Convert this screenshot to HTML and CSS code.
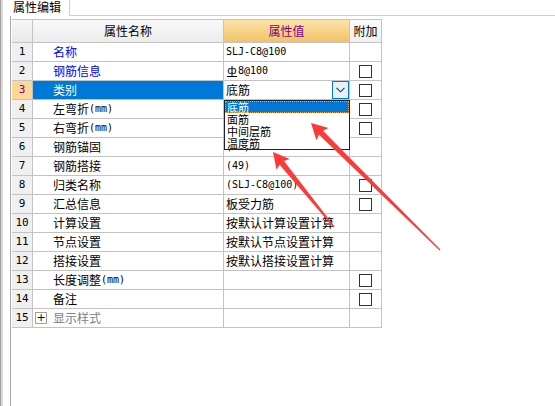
FILE: index.html
```html
<!DOCTYPE html>
<html>
<head>
<meta charset="utf-8">
<title>属性编辑</title>
<link rel="stylesheet" href="styles.css">
</head>
<body>
<div class="window">
  <div class="edge"></div>
  <div class="main">
    <div class="tabbar">
      <div class="tab">属性编辑</div>
      <div class="tabfill"></div>
    </div>
    <div class="panel">
      <div class="grid">
        <div class="c hd hd-num"></div>
        <div class="c hd hd-name">属性名称</div>
        <div class="c hd hd-val">属性值</div>
        <div class="c hd hd-add">附加</div>

        <div class="c n">1</div>
        <div class="c nm blue">名称</div>
        <div class="c v"><span class="m">SLJ-C8@100</span></div>
        <div class="c a"></div>

        <div class="c n">2</div>
        <div class="c nm blue">钢筋信息</div>
        <div class="c v"><span class="rebar">ф</span><span class="m">8@100</span></div>
        <div class="c a"><span class="cb"></span></div>

        <div class="c n cur">3</div>
        <div class="c nm sel">类别</div>
        <div class="c v">底筋<span class="dd-btn"><svg width="9" height="6" viewBox="0 0 9 6"><path d="M0.5 0.8 L4.5 4.8 L8.5 0.8" fill="none" stroke="#333" stroke-width="1.1"/></svg></span></div>
        <div class="c a"><span class="cb"></span></div>

        <div class="c n">4</div>
        <div class="c nm">左弯折<span class="m">(mm)</span></div>
        <div class="c v"></div>
        <div class="c a"><span class="cb"></span></div>

        <div class="c n">5</div>
        <div class="c nm">右弯折<span class="m">(mm)</span></div>
        <div class="c v"></div>
        <div class="c a"><span class="cb"></span></div>

        <div class="c n">6</div>
        <div class="c nm">钢筋锚固</div>
        <div class="c v"><span class="m">(35)</span></div>
        <div class="c a"></div>

        <div class="c n">7</div>
        <div class="c nm">钢筋搭接</div>
        <div class="c v"><span class="m">(49)</span></div>
        <div class="c a"></div>

        <div class="c n">8</div>
        <div class="c nm">归类名称</div>
        <div class="c v"><span class="m">(SLJ-C8@100)</span></div>
        <div class="c a"><span class="cb"></span></div>

        <div class="c n">9</div>
        <div class="c nm">汇总信息</div>
        <div class="c v">板受力筋</div>
        <div class="c a"><span class="cb"></span></div>

        <div class="c n">10</div>
        <div class="c nm">计算设置</div>
        <div class="c v">按默认计算设置计算</div>
        <div class="c a"></div>

        <div class="c n">11</div>
        <div class="c nm">节点设置</div>
        <div class="c v">按默认节点设置计算</div>
        <div class="c a"></div>

        <div class="c n">12</div>
        <div class="c nm">搭接设置</div>
        <div class="c v">按默认搭接设置计算</div>
        <div class="c a"></div>

        <div class="c n">13</div>
        <div class="c nm">长度调整<span class="m">(mm)</span></div>
        <div class="c v"></div>
        <div class="c a"><span class="cb"></span></div>

        <div class="c n">14</div>
        <div class="c nm">备注</div>
        <div class="c v"></div>
        <div class="c a"><span class="cb"></span></div>

        <div class="c n">15</div>
        <div class="c nm grp"><span class="plus">+</span>显示样式</div>
        <div class="c v"></div>
        <div class="c a"></div>
      </div>

      <div class="dropdown">
        <div class="dd-item hi">底筋</div>
        <div class="dd-item">面筋</div>
        <div class="dd-item">中间层筋</div>
        <div class="dd-item">温度筋</div>
      </div>
    </div>
  </div>
</div>

<svg class="arrows" width="555" height="406" viewBox="0 0 555 406">
  <polygon fill="#fd3a3a" points="311,123 328.4,128.1 323.0,130.8 440.4,249.6 439.6,250.4 319.0,134.8 316.4,140.3"/>
  <polygon fill="#fd3a3a" points="273,152 289.7,159.0 284.0,161.1 334.5,226.6 333.5,227.4 279.6,164.7 276.5,169.8"/>
</svg>
</body>
</html>
```

FILE: styles.css
```css
* {
  box-sizing: border-box;
}

html,
body {
  margin: 0;
  padding: 0;
  background: #ffffff;
}

body {
  width: 555px;
  height: 406px;
  overflow: hidden;
  position: relative;
  font-family: "Noto Sans CJK SC", "Noto Sans", sans-serif;
  font-size: 12px;
  color: #000000;
}

.window {
  display: flex;
  height: 406px;
}

.edge {
  width: 3px;
  background: linear-gradient(to right, #a4a4a4 0, #a4a4a4 1px, #cfcfcf 1px, #e2e2e2 3px);
}

.main {
  flex: 1;
  display: flex;
  flex-direction: column;
}

.tabbar {
  display: flex;
  height: 16px;
}

.tab {
  width: 67px;
  height: 16px;
  padding-left: 10px;
  line-height: 13px;
  border-right: 1px solid #cdcdcd;
  white-space: nowrap;
}

.tabfill {
  flex: 1;
  border-bottom: 1px solid #cdcdcd;
}

.panel {
  flex: 1;
  margin-left: 7px;
  border-left: 1px solid #a8a8a8;
  padding: 3px 0 0 1px;
  position: relative;
}

.grid {
  display: grid;
  grid-template-columns: 20px 190px 125px 31px;
  grid-template-rows: 22px repeat(15, 18px);
  gap: 1px;
  padding: 1px 1px 1px 0;
  width: 370px;
  background: #c3c3c3;
}

.c {
  background: #ffffff;
  display: flex;
  align-items: center;
  white-space: nowrap;
  overflow: hidden;
  line-height: 14px;
}

.hd {
  justify-content: center;
}

.hd-num {
  background: linear-gradient(#f7f7f7, #e9e9e9);
}

.hd-name {
  background: linear-gradient(#f9f9f9, #ececec);
}

.hd-val {
  background: linear-gradient(#fce3a9, #f1c367);
  color: #800080;
}

.hd-add {
  background: linear-gradient(#fbfbfb, #f1f1f1);
}

.n {
  justify-content: center;
  background: #f0f0f0;
  font-family: "DejaVu Sans Mono", "Liberation Mono", monospace;
  font-size: 11px;
}

.n.cur {
  background: #fdd795;
  color: #800080;
}

.nm {
  padding-left: 20px;
}

.nm.blue {
  color: #0000ff;
}

.nm.sel {
  background: #0078d7;
  color: #ffffff;
}

.nm.grp {
  padding-left: 2px;
  color: #808080;
}

.plus {
  width: 12px;
  height: 12px;
  margin-right: 6px;
  border: 1px solid #a0a0a0;
  display: flex;
  align-items: center;
  justify-content: center;
  font-family: "DejaVu Sans", sans-serif;
  font-size: 11px;
  line-height: 10px;
  color: #000000;
}

.v {
  padding-left: 2px;
}

.m {
  font-family: "DejaVu Sans Mono", "Liberation Mono", monospace;
  font-size: 10px;
}

.rebar {
  display: inline-block;
  font-family: "DejaVu Sans", sans-serif;
  font-size: 11px;
  line-height: 10px;
  width: 10px;
  text-align: center;
  border-bottom: 1px solid #000000;
  margin: 0 1px 0 1px;
}

.dd-btn {
  margin-left: auto;
  width: 17px;
  height: 18px;
  border: 1px solid #0078d7;
  background: #e5f1fb;
  display: flex;
  align-items: center;
  justify-content: center;
}

.a {
  justify-content: center;
}

.cb {
  width: 13px;
  height: 13px;
  border: 1px solid #333333;
  background: #ffffff;
}

.dropdown {
  position: absolute;
  left: 213px;
  top: 84px;
  width: 126px;
  height: 50px;
  border: 1px solid #222222;
  background: #ffffff;
}

.dd-item {
  height: 12px;
  line-height: 12px;
  padding-left: 2px;
  font-size: 11px;
  white-space: nowrap;
}

.dd-item.hi {
  background: #0078d7;
  color: #ffffff;
  outline: 1px dotted #f0a040;
  outline-offset: -1px;
}

.arrows {
  position: absolute;
  left: 0;
  top: 0;
  pointer-events: none;
}
```
